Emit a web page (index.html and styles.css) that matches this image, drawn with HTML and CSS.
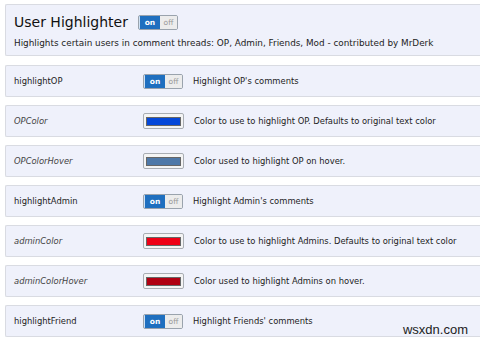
FILE: index.html
```html
<!DOCTYPE html>
<html lang="en">
<head>
    <meta charset="UTF-8">
    <title>User Highlighter</title>
    <link rel="stylesheet" href="styles.css">
</head>
<body>
    <div class="module">
        <div class="module-head">
            <h1>User Highlighter</h1>
            <span class="toggle"><span class="on">on</span><span class="off">off</span></span>
        </div>
        <p class="module-desc">Highlights certain users in comment threads: OP, Admin, Friends, Mod - contributed by MrDerk</p>
    </div>

    <div class="option">
        <span class="name">highlightOP</span>
        <span class="toggle"><span class="on">on</span><span class="off">off</span></span>
        <span class="desc">Highlight OP's comments</span>
    </div>

    <div class="option">
        <span class="name sub">OPColor</span>
        <span class="swatch"><span class="fill op"></span></span>
        <span class="desc">Color to use to highlight OP. Defaults to original text color</span>
    </div>

    <div class="option">
        <span class="name sub">OPColorHover</span>
        <span class="swatch"><span class="fill op-hover"></span></span>
        <span class="desc">Color used to highlight OP on hover.</span>
    </div>

    <div class="option">
        <span class="name">highlightAdmin</span>
        <span class="toggle"><span class="on">on</span><span class="off">off</span></span>
        <span class="desc">Highlight Admin's comments</span>
    </div>

    <div class="option">
        <span class="name sub">adminColor</span>
        <span class="swatch"><span class="fill admin"></span></span>
        <span class="desc">Color to use to highlight Admins. Defaults to original text color</span>
    </div>

    <div class="option">
        <span class="name sub">adminColorHover</span>
        <span class="swatch"><span class="fill admin-hover"></span></span>
        <span class="desc">Color used to highlight Admins on hover.</span>
    </div>

    <div class="option">
        <span class="name">highlightFriend</span>
        <span class="toggle"><span class="on">on</span><span class="off">off</span></span>
        <span class="desc">Highlight Friends' comments</span>
    </div>

    <div class="watermark">wsxdn.com</div>
</body>
</html>
```

FILE: styles.css
```css
body {
    margin: 0;
    padding-top: 4px;
    background: #fff;
    font-family: "DejaVu Sans", Verdana, sans-serif;
    color: #222;
    overflow: hidden;
    height: 342px;
    box-sizing: border-box;
    position: relative;
}
.module, .option {
    margin-left: 5px;
    background-color: #eff1fb;
    border: 1px solid #d9dbe2;
    border-right: 0;
    border-radius: 2px 0 0 2px;
}
.module {
    padding: 7px 8px 0;
    box-sizing: border-box;
    height: 52px;
}
.module-head {
    display: flex;
    align-items: center;
    height: 20px;
}
h1 {
    margin: 0 10px 0 0;
    font-size: 14px;
    font-weight: normal;
    color: #111;
}
.module-desc {
    margin: 5px 0 0;
    font-size: 8.85px;
    line-height: 12px;
    white-space: nowrap;
}
.option {
    display: flex;
    align-items: center;
    height: 30px;
    margin-top: 8px;
    padding-left: 8px;
    font-size: 8.4px;
    white-space: nowrap;
}
.module + .option {
    margin-top: 9px;
}
.name {
    width: 129px;
    flex: none;
}
.sub {
    font-style: italic;
    color: #444;
}
.toggle {
    display: flex;
    flex: none;
    width: 40px;
    height: 15px;
    box-sizing: border-box;
    border: 1px solid #9aa3ad;
    border-radius: 2px;
    overflow: hidden;
    font-size: 7.5px;
}
.toggle .on {
    width: 20px;
    background: #1f6fbf;
    color: #fff;
    font-weight: bold;
    text-align: center;
    line-height: 13px;
    border-left: 1px solid #cfe2f5;
}
.toggle .off {
    flex: 1;
    background: #ececec;
    color: #999;
    text-align: center;
    line-height: 13px;
}
.swatch {
    display: flex;
    flex: none;
    align-items: center;
    justify-content: center;
    width: 41px;
    height: 16px;
    box-sizing: border-box;
    border: 1px solid #a9adb3;
    border-radius: 2px;
    background: #f4f4f4;
}
.fill {
    width: 35px;
    height: 9px;
    border: 1px solid #666;
    box-sizing: border-box;
}
.op { background: #0548d9; }
.op-hover { background: #4e78a8; }
.admin { background: #ee0016; }
.admin-hover { background: #b00012; }
.desc {
    margin-left: 10px;
}
.watermark {
    position: absolute;
    right: 12px;
    bottom: 5px;
    font-family: "Liberation Sans", Arial, sans-serif;
    font-size: 13px;
    color: #222;
}
```
